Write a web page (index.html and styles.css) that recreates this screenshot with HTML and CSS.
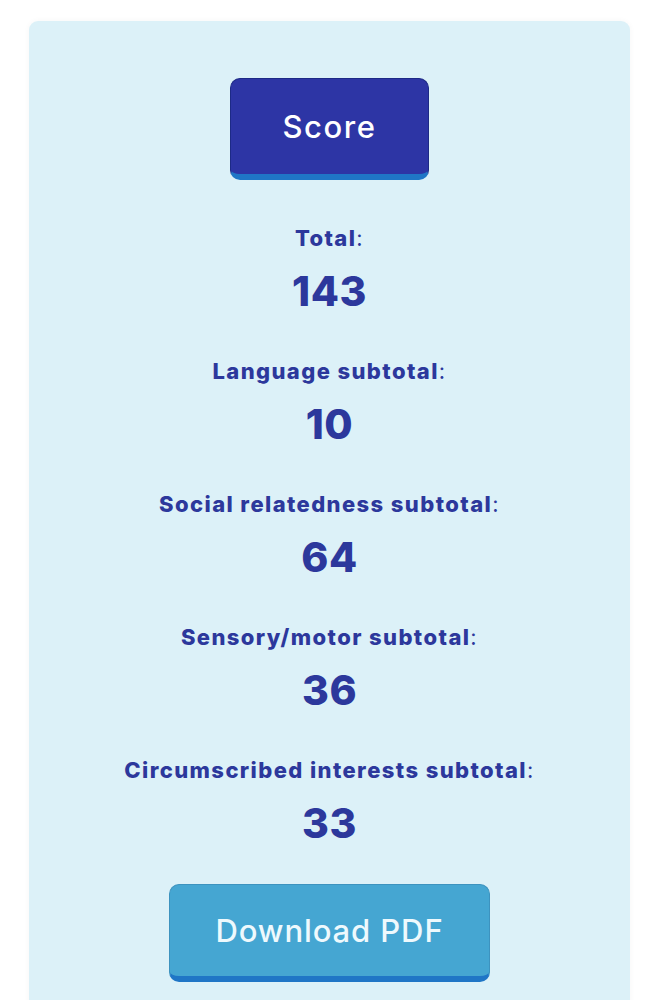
FILE: index.html
```html
<!DOCTYPE html>
<html>
<head>
	<meta charset="utf-8" />
	<meta name="viewport" content="width=device-width, initial-scale=1.0" />
	<title>Score</title>
	<link rel="stylesheet" href="styles.css">
</head>
<body>
	<section class="results">
		<button class="btn btn--score" type="button">Score</button>

		<div class="result">
			<p class="result__label"><strong>Total</strong>:</p>
			<p class="result__value">143</p>
		</div>
		<div class="result">
			<p class="result__label"><strong>Language subtotal</strong>:</p>
			<p class="result__value">10</p>
		</div>
		<div class="result">
			<p class="result__label"><strong>Social relatedness subtotal</strong>:</p>
			<p class="result__value">64</p>
		</div>
		<div class="result">
			<p class="result__label"><strong>Sensory/motor subtotal</strong>:</p>
			<p class="result__value">36</p>
		</div>
		<div class="result">
			<p class="result__label"><strong>Circumscribed interests subtotal</strong>:</p>
			<p class="result__value">33</p>
		</div>

		<button class="btn btn--download" type="button">Download PDF</button>
	</section>
</body>
</html>
```

FILE: styles.css
```css
body {
	font-family: Inter, "Open Sans", sans-serif;
	color: #2c389c;
	background: #fff;
	margin: 0;
	padding: 21px 29px 0;
}
.results {
	background: #dcf1f8;
	border-radius: 9px;
	box-shadow: 0 0 6px rgba(0, 0, 0, 0.04);
	display: flex;
	flex-direction: column;
	align-items: center;
	padding: 57px 20px 40px;
	min-height: 1000px;
	box-sizing: border-box;
}
.btn {
	font-family: inherit;
	font-size: 31px;
	font-weight: 500;
	letter-spacing: 1.6px;
	color: #fff;
	border: 1px solid #1d2a86;
	border-bottom: 6px solid #1f76c6;
	border-radius: 10px;
	cursor: pointer;
}
.btn--score {
	background: #2d35a5;
	width: 199px;
	height: 102px;
	margin-bottom: 43px;
}
.btn--download {
	background: #45a6d2;
	border-color: #3d93bf;
	border-bottom-color: #1f76c6;
	color: #eef9fd;
	width: 321px;
	height: 98px;
	margin-top: -4px;
	letter-spacing: 0.9px;
}
.result {
	display: flex;
	flex-direction: column;
	align-items: center;
	margin-bottom: 40px;
}
.result p {
	margin: 0;
}
.result__label {
	font-size: 22px;
	line-height: 30px;
	letter-spacing: 1.4px;
	margin-bottom: 13px !important;
}
.result__label strong {
	font-weight: 800;
}
.result__value {
	font-size: 41px;
	line-height: 50px;
	font-weight: 800;
	letter-spacing: 0.5px;
}
```
